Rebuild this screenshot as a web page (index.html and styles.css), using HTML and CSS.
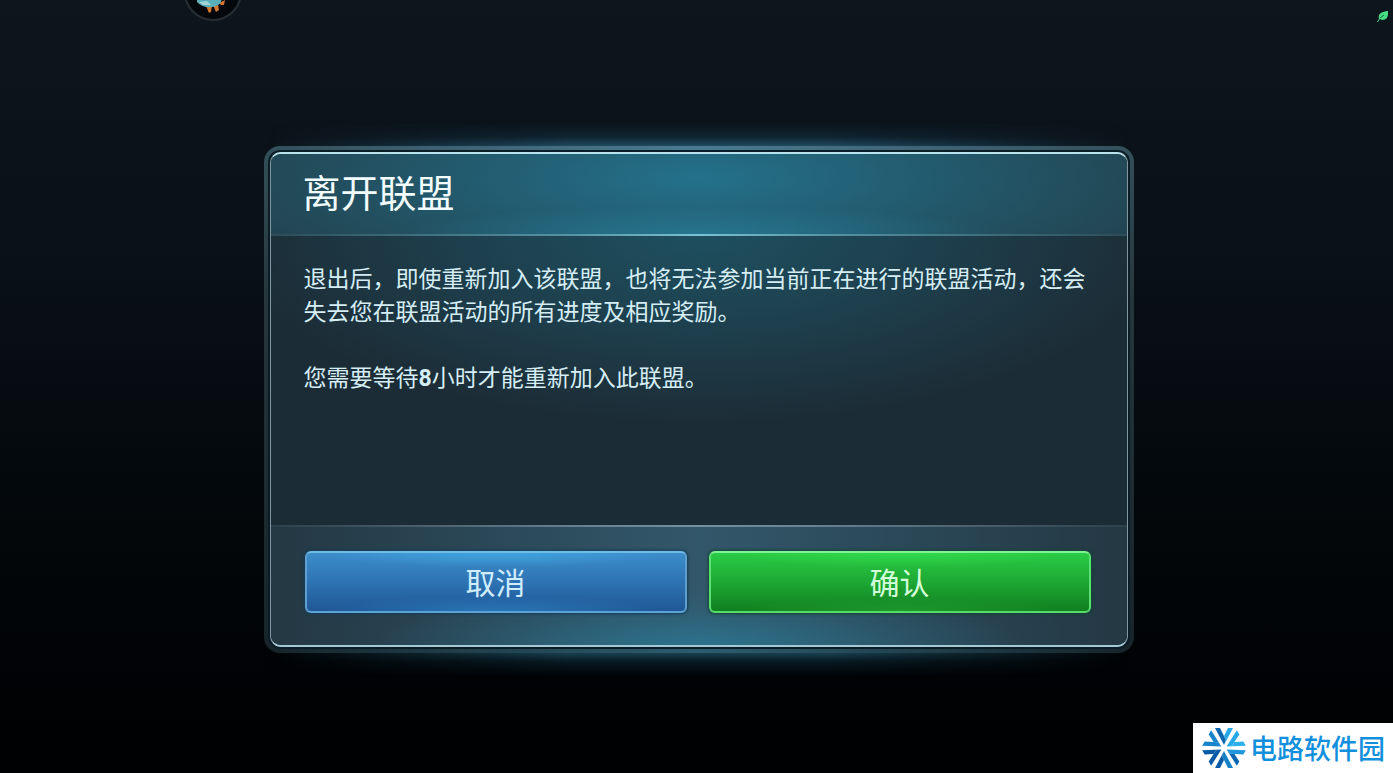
FILE: index.html
```
<!DOCTYPE html>
<html lang="zh-CN">
<head>
  <meta charset="UTF-8" />
  <meta name="viewport" content="width=device-width, initial-scale=1" />
  <title>离开联盟</title>
  <link rel="stylesheet" href="styles.css">
</head>
<body>

  <div class="avatar">
    <svg viewBox="0 0 60 60" width="60" height="60" aria-hidden="true">
      <circle cx="30" cy="30" r="28" fill="#04070b" stroke="#272e34" stroke-width="2" />
      <path d="M23 44 L29 43 L28 50 L26 51 Z M30 43 L35 42 L36 48 L33 50 Z M36 41 L42 38 L41 43 L38 43 Z" fill="#d0762f" />
      <path d="M14 38 L38 36 Q40 41 33 44 Q22 48 14 40 Z" fill="#5ab0ba" />
      <path d="M16 40 L24 39 L28 43 L20 43 Z" fill="#a3d5d6" />
    </svg>
  </div>

  <svg class="leaf" viewBox="0 0 12 12" width="12" height="12" aria-hidden="true">
    <path d="M0 12 L2 9 Q0 2 11 1 Q12 10 5 10 L3 9 L1 12 Z" fill="#48dc85" />
    <path d="M3 8 L7 5" stroke="#087040" stroke-width="1" fill="none" />
  </svg>

  <main class="page">
    <div class="frame">
      <section class="dialog" role="dialog" aria-labelledby="titulo">
        <header class="dialog-header">
          <h1 id="titulo">离开联盟</h1>
        </header>

        <div class="dialog-body">
          <p>退出后，即使重新加入该联盟，也将无法参加当前正在进行的联盟活动，还会失去您在联盟活动的所有进度及相应奖励。</p>
          <p>您需要等待<span class="num">8</span>小时才能重新加入此联盟。</p>
        </div>

        <footer class="dialog-footer">
          <button type="button" class="btn btn-cancel">取消</button>
          <button type="button" class="btn btn-confirm">确认</button>
        </footer>
      </section>
    </div>
  </main>

  <div class="watermark">
    <svg viewBox="0 0 44 40" width="44" height="40" aria-hidden="true">
      <g transform="translate(22 20)">
        <g>
          <path d="M-9 -20 L-4 -20 L2 -8 L0 -3 Z" fill="#0c66b0" />
          <path d="M9 -20 L4 -20 L0 -12 L2 -8 L0 -3 Z" fill="#25a8e8" />
        </g>
        <g transform="rotate(60)">
          <path d="M-9 -20 L-4 -20 L2 -8 L0 -3 Z" fill="#25a8e8" />
          <path d="M9 -20 L4 -20 L0 -12 L2 -8 L0 -3 Z" fill="#2eb0ec" />
        </g>
        <g transform="rotate(120)">
          <path d="M-9 -20 L-4 -20 L2 -8 L0 -3 Z" fill="#2197dc" />
          <path d="M9 -20 L4 -20 L0 -12 L2 -8 L0 -3 Z" fill="#0c66b0" />
        </g>
        <g transform="rotate(180)">
          <path d="M-9 -20 L-4 -20 L2 -8 L0 -3 Z" fill="#1380c8" />
          <path d="M9 -20 L4 -20 L0 -12 L2 -8 L0 -3 Z" fill="#0a5aa6" />
        </g>
        <g transform="rotate(240)">
          <path d="M-9 -20 L-4 -20 L2 -8 L0 -3 Z" fill="#0a5aa6" />
          <path d="M9 -20 L4 -20 L0 -12 L2 -8 L0 -3 Z" fill="#0a5aa6" />
        </g>
        <g transform="rotate(300)">
          <path d="M-9 -20 L-4 -20 L2 -8 L0 -3 Z" fill="#1984cc" />
          <path d="M9 -20 L4 -20 L0 -12 L2 -8 L0 -3 Z" fill="#1984cc" />
        </g>
      </g>
    </svg>
    <span>电路软件园</span>
  </div>

</body>
</html>
```
FILE: styles.css
```
* {
  box-sizing: border-box;
}

body {
  margin: 0;
  min-height: 100vh;
  overflow: hidden;
  font-family: "Noto Sans CJK SC", sans-serif;
  background: linear-gradient(#0d151d 0%, #0a1118 30%, #04090d 60%, #000204 90%, #000103 100%);
}

.page {
  display: flex;
  align-items: center;
  justify-content: center;
  min-height: 100vh;
  padding: 26px 0 0 4px;
}

.avatar {
  position: absolute;
  top: -38px;
  left: 183px;
}

.leaf {
  position: absolute;
  top: 10px;
  right: 4px;
}

/* moldura externa */
.frame {
  position: relative;
  width: 100%;
  max-width: 870px;
  padding: 2px;
  border: 4px solid transparent;
  border-radius: 16px;
  background:
    linear-gradient(#0b1d26, #0b1d26) padding-box,
    radial-gradient(ellipse 50% 30% at 50% 0%, #4a7b93, transparent) border-box,
    radial-gradient(ellipse 50% 20% at 50% 100%, #2d5d70, transparent) border-box,
    linear-gradient(#33505a, #26363c 30%, #17242a) border-box;
}

.frame::before,
.frame::after {
  content: "";
  position: absolute;
  left: 0;
  right: 0;
  height: 30px;
  z-index: -1;
  -webkit-mask-image: linear-gradient(90deg, transparent, #000 35%, #000 65%, transparent);
  mask-image: linear-gradient(90deg, transparent, #000 35%, #000 65%, transparent);
}

.frame::before {
  top: -28px;
  background: linear-gradient(transparent, rgba(24, 70, 94, 0.35) 50%, #29627e);
}

.frame::after {
  bottom: -28px;
  background: linear-gradient(#245a70, rgba(18, 58, 76, 0.4) 50%, transparent);
}

.dialog {
  overflow: hidden;
  border: 2px solid;
  border-width: 2px 1px;
  border-color: #b8e2ec #80979f #a5c8d5 #80979f;
  border-radius: 11px;
  background: #1c2c36;
}

.dialog-header {
  padding: 9px 32px 15px;
  border-bottom: 2px solid;
  border-image: linear-gradient(90deg, #2b4c58, #5693a6 35%, #7bc1d6 50%, #5693a6 65%, #2b4c58) 1;
  background:
    radial-gradient(ellipse 35% 35% at 50% 100%, rgba(40, 132, 162, 0.6), transparent),
    radial-gradient(ellipse 58% 160% at 50% 30%, #24718b, #225769 55%, #234350);
}

.dialog-header h1 {
  margin: 0;
  font-size: 38px;
  font-weight: 400;
  line-height: 56px;
  color: #f2fcff;
}

.dialog-body {
  min-height: 289px;
  padding: 25px 33px;
  background: radial-gradient(ellipse 55% 65% at 50% 0%, #1e4f5f, #1e414f 45%, #1c2c36);
}

.dialog-body p {
  margin: 0 0 33px;
  font-size: 23px;
  line-height: 33px;
  color: #d5edf4;
}

.num {
  font-family: Roboto, "Liberation Sans", sans-serif;
  font-weight: bold;
}

.dialog-footer {
  display: flex;
  gap: 22px;
  padding: 24px 36px 32px 34px;
  border-top: 2px solid;
  border-image: linear-gradient(90deg, #2b404b, #65818e 35%, #7590a0 50%, #65818e 65%, #2b404b) 1;
  background:
    radial-gradient(ellipse 38% 48% at 50% 100%, #2c728c, rgba(44, 104, 128, 0.4) 60%, transparent),
    linear-gradient(90deg, #243843, #2d4e5f 35%, #33576a 50%, #2d4e5f 65%, #243843);
}

.btn {
  flex: 1;
  height: 62px;
  padding: 0 0 2px;
  border: 2px solid;
  border-radius: 6px;
  font-family: inherit;
  font-size: 30px;
  line-height: 40px;
  cursor: pointer;
}

.btn-cancel {
  color: #d0edff;
  border-color: #6ebce8 #5e9fd0 #5ba3d7;
  background:
    radial-gradient(ellipse 45% 25% at 50% 0%, rgba(64, 174, 232, 0.7), transparent),
    radial-gradient(ellipse 45% 25% at 50% 100%, rgba(45, 130, 194, 0.7), transparent),
    linear-gradient(#3c8dca, #2f76b6 45%, #1f5796);
  box-shadow: 0 0 3px 1px #163d57;
}

.btn-confirm {
  color: #d3ffd8;
  border-color: #83f196 #5be072 #58da69;
  background:
    radial-gradient(ellipse 45% 25% at 50% 0%, rgba(52, 221, 76, 0.7), transparent),
    radial-gradient(ellipse 45% 25% at 50% 100%, rgba(33, 160, 48, 0.7), transparent),
    linear-gradient(#29cb45, #1fac36 45%, #117f20);
  box-shadow: 0 0 3px 1px #114534;
}

.btn:hover {
  filter: brightness(1.1);
}

.watermark {
  position: fixed;
  right: 0;
  bottom: 0;
  display: flex;
  align-items: center;
  gap: 4px;
  height: 50px;
  padding: 0 8px 0 9px;
  background: white;
  color: #128fdd;
  font-size: 27px;
  font-weight: 500;
  line-height: 40px;
}
```
